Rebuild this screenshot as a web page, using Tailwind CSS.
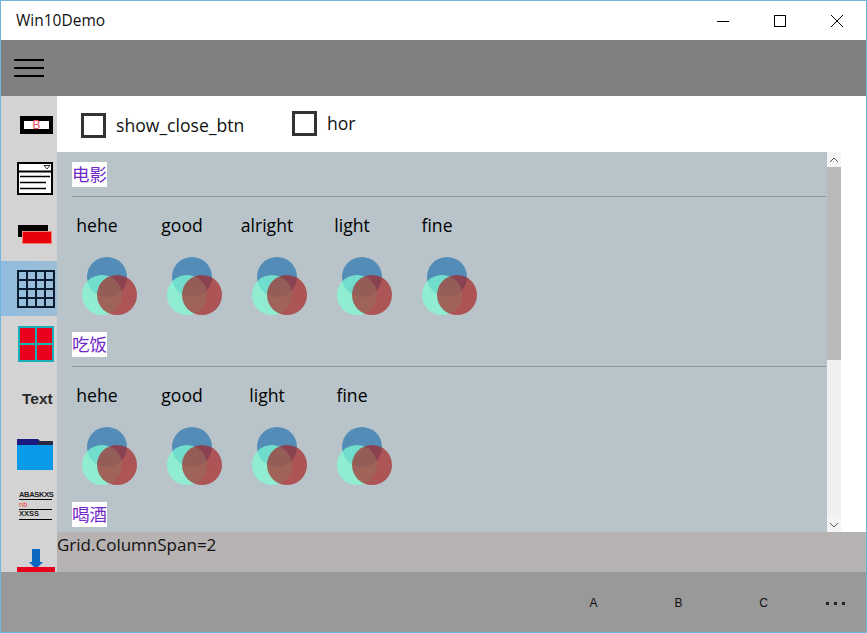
<!DOCTYPE html>
<html><head><meta charset="utf-8"><script src="https://cdn.jsdelivr.net/npm/@tailwindcss/browser@4"></script></head>
<body class="m-0">
<div class="w-[867px] h-[633px] border border-[#74b4dc] bg-white flex flex-col overflow-hidden text-black font-['Open_Sans','Noto_Sans_CJK_SC',sans-serif]">
  <div class="h-[39px] shrink-0 flex items-center justify-between pl-[15px]">
    <span class="text-[15.5px] leading-[39px] text-[#111]">Win10Demo</span>
    <div class="flex items-center pr-[23px] gap-[45px]">
      <svg width="12" height="12" viewBox="0 0 12 12"><path d="M0 6.5H12" stroke="#000"/></svg>
      <svg width="12" height="12" viewBox="0 0 12 12" fill="none"><rect x=".5" y=".5" width="11" height="11" stroke="#000"/></svg>
      <svg width="12" height="12" viewBox="0 0 12 12"><path d="M0 0L12 12M12 0L0 12" stroke="#000"/></svg>
    </div>
  </div>
  <div class="h-[56px] shrink-0 bg-[#808080] flex items-center pl-[13px]">
    <div class="w-[30px] flex flex-col gap-[6px]">
      <div class="h-[2px] bg-black"></div><div class="h-[2px] bg-black"></div><div class="h-[2px] bg-black"></div>
    </div>
  </div>
  <div class="flex h-[476px] shrink-0">
    <div class="w-[56px] shrink-0 bg-[#d3d3d3] overflow-hidden flex flex-col">
      <div class="h-[55px] shrink-0 flex items-center pl-[19px] pt-[2px]">
        <div class="w-[33px] h-[18px] border-x-[4px] border-y-[5px] border-black bg-white flex items-center justify-center text-[12px] leading-none text-[#e85060] font-['Liberation_Sans',sans-serif]">B</div>
      </div>
      <div class="h-[55px] shrink-0 flex items-center pl-[16px]">
        <svg width="36" height="33" viewBox="0 0 36 33"><rect x="1" y="1" width="34" height="31" fill="#fff" stroke="#000" stroke-width="2"/><path d="M1 9.5H35" stroke="#000" stroke-width="2"/><path d="M27 3.5H33L30 7Z" fill="none" stroke="#333"/><path d="M3 14.5H33M3 20.5H29M3 26.5H29" stroke="#000" stroke-width="1.5"/></svg>
      </div>
      <div class="h-[55px] shrink-0 flex items-center pl-[16px] pt-[2px]">
        <svg width="36" height="19" viewBox="0 0 36 19"><rect x="1" y="0" width="30" height="12" fill="#000"/><rect x="5.5" y="6.5" width="29" height="12" fill="#e8000c" stroke="#f08070"/></svg>
      </div>
      <div class="h-[55px] shrink-0 flex items-center pl-[16px] bg-linear-to-r from-[#8fbce0] to-[#9dbdd6]">
        <svg width="38" height="38" viewBox="0 0 38 38" fill="none" stroke="#0a1c30" stroke-width="2"><rect x="1" y="1" width="36" height="36"/><path d="M10 1V37M19 1V37M28 1V37M1 10H37M1 19H37M1 28H37"/></svg>
      </div>
      <div class="h-[55px] shrink-0 flex items-center pl-[17px]">
        <svg width="36" height="36" viewBox="0 0 36 36"><rect width="36" height="36" fill="#18b0b8"/><rect x="2" y="2" width="15" height="15" fill="#e8001c"/><rect x="19" y="2" width="15" height="15" fill="#e8001c"/><rect x="2" y="19" width="15" height="15" fill="#e8001c"/><rect x="19" y="19" width="15" height="15" fill="#e8001c"/></svg>
      </div>
      <div class="h-[55px] shrink-0 flex items-center pl-[21px] text-[15.5px] font-bold text-[#2a2a2a] font-['Liberation_Sans',sans-serif]">Text</div>
      <div class="h-[55px] shrink-0 flex items-center pl-[16px] pt-[1px]">
        <svg width="36" height="31" viewBox="0 0 36 31"><path d="M0 0H21L23 2H36V8H0Z" fill="#1a1a80"/><path d="M21 2H36V7H21Z" fill="#2a2a40"/><rect x="0" y="6" width="36" height="25" fill="#0a9be8"/></svg>
      </div>
      <div class="h-[55px] shrink-0 flex flex-col pl-[18px] pt-[10px] font-['Liberation_Sans',sans-serif] font-bold text-[7.5px] leading-[8px] text-[#222]">
        <div class="border-b border-black w-[33px] h-[9px] whitespace-nowrap tracking-[-0.3px]">ABASKXS</div>
        <div class="border-b border-black w-[33px] h-[9px] mt-[1px] text-[#f04040] font-normal">nb</div>
        <div class="border-b border-black w-[33px] h-[10px]">XXSS</div>
      </div>
      <div class="h-[55px] shrink-0 flex flex-col pl-[16px] pt-[13px]">
        <svg width="38" height="24" viewBox="0 0 38 24" class="shrink-0"><path d="M15 0H23V13H26L19 20L12 13H15Z" fill="#0a68c0"/><rect x="0" y="18" width="38" height="6" fill="#e8001c"/></svg>
      </div>
    </div>
    <div class="flex-1 flex flex-col min-w-0">
      <div class="h-[56px] shrink-0 flex text-[17.6px] text-[#111]">
        <div class="flex items-center pl-[24px] pt-[2px] w-[235px] gap-[10px]"><div class="w-[25px] h-[25px] border-[3px] border-[#333] bg-white"></div><span>show_close_btn</span></div>
        <div class="flex items-center gap-[10px] mb-[2px]"><div class="w-[25px] h-[25px] border-[3px] border-[#333] bg-white"></div><span>hor</span></div>
      </div>
      <div class="h-[380px] shrink-0 flex">
        <div class="w-[770px] bg-[#b8c4c9] overflow-hidden pt-[10px]">
          <div class="h-[170px] shrink-0 flex flex-col">
            <div class="ml-[15px] mr-[1px] h-[34px] border-b border-[#8c979c] box-content"><span class="inline-block bg-white h-[25px] text-[17.5px] leading-[25px] text-[#7028c8]">电影</span></div>
            <div class="flex gap-[5px] mt-[15px]">
              <div class="w-[80px]"><div class="h-[26px] text-center text-[17.6px] leading-[26px] text-black">hehe</div><svg class="ml-[25px] mt-[19px]" width="55" height="58" viewBox="0 0 55 58"><circle cx="25" cy="20" r="20" fill="#0060a8" fill-opacity=".55"/><circle cx="20" cy="38" r="20" fill="#7fffd4" fill-opacity=".7"/><circle cx="35" cy="38" r="20" fill="#a81818" fill-opacity=".65"/></svg></div>
              <div class="w-[80px]"><div class="h-[26px] text-center text-[17.6px] leading-[26px] text-black">good</div><svg class="ml-[25px] mt-[19px]" width="55" height="58" viewBox="0 0 55 58"><circle cx="25" cy="20" r="20" fill="#0060a8" fill-opacity=".55"/><circle cx="20" cy="38" r="20" fill="#7fffd4" fill-opacity=".7"/><circle cx="35" cy="38" r="20" fill="#a81818" fill-opacity=".65"/></svg></div>
              <div class="w-[80px]"><div class="h-[26px] text-center text-[17.6px] leading-[26px] text-black">alright</div><svg class="ml-[25px] mt-[19px]" width="55" height="58" viewBox="0 0 55 58"><circle cx="25" cy="20" r="20" fill="#0060a8" fill-opacity=".55"/><circle cx="20" cy="38" r="20" fill="#7fffd4" fill-opacity=".7"/><circle cx="35" cy="38" r="20" fill="#a81818" fill-opacity=".65"/></svg></div>
              <div class="w-[80px]"><div class="h-[26px] text-center text-[17.6px] leading-[26px] text-black">light</div><svg class="ml-[25px] mt-[19px]" width="55" height="58" viewBox="0 0 55 58"><circle cx="25" cy="20" r="20" fill="#0060a8" fill-opacity=".55"/><circle cx="20" cy="38" r="20" fill="#7fffd4" fill-opacity=".7"/><circle cx="35" cy="38" r="20" fill="#a81818" fill-opacity=".65"/></svg></div>
              <div class="w-[80px]"><div class="h-[26px] text-center text-[17.6px] leading-[26px] text-black">fine</div><svg class="ml-[25px] mt-[19px]" width="55" height="58" viewBox="0 0 55 58"><circle cx="25" cy="20" r="20" fill="#0060a8" fill-opacity=".55"/><circle cx="20" cy="38" r="20" fill="#7fffd4" fill-opacity=".7"/><circle cx="35" cy="38" r="20" fill="#a81818" fill-opacity=".65"/></svg></div>
            </div>
          </div>
          <div class="h-[170px] shrink-0 flex flex-col">
            <div class="ml-[15px] mr-[1px] h-[34px] border-b border-[#8c979c] box-content"><span class="inline-block bg-white h-[25px] text-[17.5px] leading-[25px] text-[#7028c8]">吃饭</span></div>
            <div class="flex gap-[5px] mt-[15px]">
              <div class="w-[80px]"><div class="h-[26px] text-center text-[17.6px] leading-[26px] text-black">hehe</div><svg class="ml-[25px] mt-[19px]" width="55" height="58" viewBox="0 0 55 58"><circle cx="25" cy="20" r="20" fill="#0060a8" fill-opacity=".55"/><circle cx="20" cy="38" r="20" fill="#7fffd4" fill-opacity=".7"/><circle cx="35" cy="38" r="20" fill="#a81818" fill-opacity=".65"/></svg></div>
              <div class="w-[80px]"><div class="h-[26px] text-center text-[17.6px] leading-[26px] text-black">good</div><svg class="ml-[25px] mt-[19px]" width="55" height="58" viewBox="0 0 55 58"><circle cx="25" cy="20" r="20" fill="#0060a8" fill-opacity=".55"/><circle cx="20" cy="38" r="20" fill="#7fffd4" fill-opacity=".7"/><circle cx="35" cy="38" r="20" fill="#a81818" fill-opacity=".65"/></svg></div>
              <div class="w-[80px]"><div class="h-[26px] text-center text-[17.6px] leading-[26px] text-black">light</div><svg class="ml-[25px] mt-[19px]" width="55" height="58" viewBox="0 0 55 58"><circle cx="25" cy="20" r="20" fill="#0060a8" fill-opacity=".55"/><circle cx="20" cy="38" r="20" fill="#7fffd4" fill-opacity=".7"/><circle cx="35" cy="38" r="20" fill="#a81818" fill-opacity=".65"/></svg></div>
              <div class="w-[80px]"><div class="h-[26px] text-center text-[17.6px] leading-[26px] text-black">fine</div><svg class="ml-[25px] mt-[19px]" width="55" height="58" viewBox="0 0 55 58"><circle cx="25" cy="20" r="20" fill="#0060a8" fill-opacity=".55"/><circle cx="20" cy="38" r="20" fill="#7fffd4" fill-opacity=".7"/><circle cx="35" cy="38" r="20" fill="#a81818" fill-opacity=".65"/></svg></div>
            </div>
          </div>
          <div class="ml-[15px]"><span class="inline-block bg-white h-[25px] text-[17.5px] leading-[25px] text-[#7028c8]">喝酒</span></div>
        </div>
        <div class="w-[14px] shrink-0 flex flex-col bg-[#f0f0f0]">
          <div class="h-[15px] bg-[#f4f4f4] flex items-center justify-center"><svg width="10" height="6" viewBox="0 0 10 6" fill="none"><path d="M1 5L5 1L9 5" stroke="#555"/></svg></div>
          <div class="h-[193px] bg-[#b9b9b9]"></div>
          <div class="flex-1"></div>
          <div class="h-[15px] bg-[#f4f4f4] flex items-center justify-center"><svg width="10" height="6" viewBox="0 0 10 6" fill="none"><path d="M1 1L5 5L9 1" stroke="#555"/></svg></div>
        </div>
      </div>
      <div class="h-[40px] shrink-0 bg-[#b8b3b3] text-[17px] leading-[26px] text-[#111]">Grid.ColumnSpan=2</div>
    </div>
  </div>
  <div class="flex-1 bg-[#999] flex items-center justify-end pt-[2px] text-[12px] text-[#111] font-['Liberation_Sans',sans-serif]">
    <div class="w-[85px] text-center">A</div>
    <div class="w-[85px] text-center">B</div>
    <div class="w-[85px] text-center">C</div>
    <div class="w-[60px] pl-[20px] pr-[21px] flex justify-between items-center"><i class="w-[3px] h-[3px] bg-[#222]"></i><i class="w-[3px] h-[3px] bg-[#222]"></i><i class="w-[3px] h-[3px] bg-[#222]"></i></div>
  </div>
</div>
</body></html>
